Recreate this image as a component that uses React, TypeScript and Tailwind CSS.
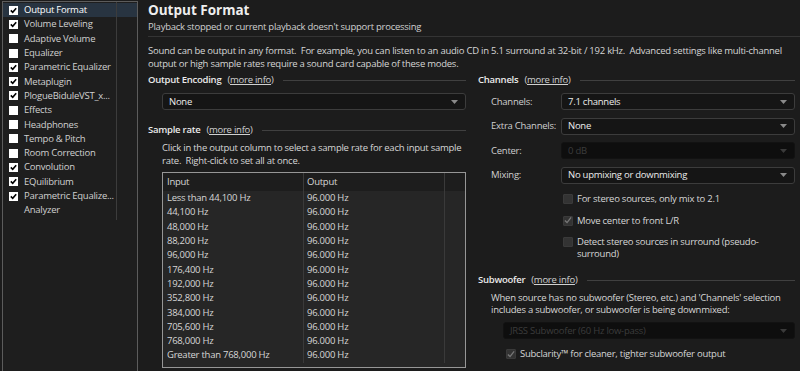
import React from "react";

const font = { fontFamily: '"Open Sans", "Noto Sans", sans-serif' };

const sideItems: [string, boolean | null][] = [
  ["Output Format", true],
  ["Volume Leveling", true],
  ["Adaptive Volume", false],
  ["Equalizer", false],
  ["Parametric Equalizer", true],
  ["Metaplugin", true],
  ["PlogueBiduleVST_x...", true],
  ["Effects", false],
  ["Headphones", false],
  ["Tempo & Pitch", false],
  ["Room Correction", false],
  ["Convolution", true],
  ["EQuilibrium", true],
  ["Parametric Equalize...", true],
  ["Analyzer", null],
];

const rates = [
  "Less than 44,100 Hz",
  "44,100 Hz",
  "48,000 Hz",
  "88,200 Hz",
  "96,000 Hz",
  "176,400 Hz",
  "192,000 Hz",
  "352,800 Hz",
  "384,000 Hz",
  "705,600 Hz",
  "768,000 Hz",
  "Greater than 768,000 Hz",
];

function WhiteCheck({ checked }: { checked: boolean }) {
  return (
    <div className="w-[9px] h-[9px] bg-white flex items-center justify-center shrink-0">
      {checked && (
        <svg width="7" height="7" viewBox="0 0 7 7">
          <path d="M0.8 3.4 L2.7 5.3 L6.2 1.2" stroke="#000" strokeWidth="1.6" fill="none" />
        </svg>
      )}
    </div>
  );
}

function DarkCheck({ checked }: { checked?: boolean }) {
  return (
    <div className="w-[10px] h-[10px] bg-[#333333] border border-[#3a3a3a] rounded-[1px] flex items-center justify-center shrink-0">
      {checked && (
        <svg width="9" height="9" viewBox="0 0 9 9">
          <path d="M1 4.5 L3.4 6.8 L8 1" stroke="#777" strokeWidth="1.5" fill="none" />
        </svg>
      )}
    </div>
  );
}

function Caret({ color = "#8a8a8a" }: { color?: string }) {
  return (
    <svg width="7" height="4" viewBox="0 0 7 4">
      <path d="M0 0 H7 L3.5 4 Z" fill={color} />
    </svg>
  );
}

function Select({ value, disabled, className = "" }: { value: string; disabled?: boolean; className?: string }) {
  return (
    <div
      className={
        "h-[17px] rounded-[3px] border flex items-center justify-between pl-[6px] pr-[7px] " +
        (disabled
          ? "bg-[#0e0e0e] border-[#121212] text-[#3c3c3c]"
          : "bg-[#151515] border-[#3c3c3c] text-[#ececec]") +
        " " +
        className
      }
    >
      <span className="whitespace-nowrap">{value}</span>
      <Caret color={disabled ? "#3a3a3a" : "#8a8a8a"} />
    </div>
  );
}

function SectionHead({ title }: { title: string }) {
  return (
    <div className="flex items-center gap-[6px] h-[14px]">
      <span className="font-semibold text-[#eaeaea] whitespace-nowrap">{title}</span>
      <span className="text-[#d0d0d0] whitespace-nowrap">
        (<span className="underline">more info</span>)
      </span>
      <div className="flex-1 h-px bg-[#404040] ml-[3px]" />
    </div>
  );
}

export default function App() {
  return (
    <div
      className="w-[800px] h-[371px] bg-[#1c1c1c] text-[#d6d6d6] text-[9.5px] tracking-[-0.25px] leading-[12px] flex overflow-hidden"
      style={font}
    >
      {/* Sidebar */}
      <div className="w-[138px] shrink-0 h-full pl-[2px] pt-[1px]">
        <div className="h-[372px] border border-[#5c5c5c] bg-[#1e1e1e] relative pt-[1px] w-[136px]">
          <div className="absolute left-[113px] top-0 h-[218px] w-px bg-[#3c3c3c]" />
          {sideItems.map(([name, c], i) => (
            <div
              key={name}
              className={
                "h-[14.3px] flex items-center " + (i === 0 ? "bg-[#283441] text-white" : "text-[#d0d0d0]")
              }
            >
              <div className="w-[21px] pl-[6px] flex items-center shrink-0">
                {c !== null && <WhiteCheck checked={c} />}
              </div>
              <span className="whitespace-nowrap">{name}</span>
            </div>
          ))}
        </div>
      </div>

      {/* Main */}
      <div className="flex-1 pl-[10px] pt-[1px] pr-[5px]">
        <div className="h-[18px] flex items-center text-[13.5px] tracking-[0px] font-bold text-[#eeeeee]">
          Output Format
        </div>
        <div className="h-[13px] leading-[13px] mt-[1px] text-[#d0d0d0]">
          Playback stopped or current playback doesn't support processing
        </div>
        <div className="h-px bg-[#343434] mt-[3px] -mr-[5px]" />
        <div className="mt-[8px] leading-[12.5px] text-[#d6d6d6]">
          Sound can be output in any format.&nbsp; For example, you can listen to an audio CD in 5.1 surround at 32-bit / 192 kHz.&nbsp; Advanced settings like multi-channel output or high sample rates require a sound card capable of these modes.
        </div>

        <div className="flex mt-[3px] gap-[12px]">
          {/* Left column */}
          <div className="w-[318px] shrink-0">
            <SectionHead title="Output Encoding" />
            <div className="pl-[14px] mt-[6px]">
              <Select value="None" />
            </div>

            <div className="mt-[13px]">
              <SectionHead title="Sample rate" />
            </div>
            <div className="pl-[14px] mt-[5px]">
              <div className="leading-[12.5px]">
                Click in the output column to select a sample rate for each input sample rate.&nbsp; Right-click to set all at once.
              </div>
              <div className="mt-[5px] border border-[#969696] bg-[#262626] h-[196px] flex flex-col">
                <div className="flex h-[18px] shrink-0 bg-[#1d1d1d]">
                  <div className="w-[141px] pl-[4px] border-r border-[#3a3a3a] flex items-center">Input</div>
                  <div className="w-[141px] pl-[3px] border-r border-[#3a3a3a] flex items-center">Output</div>
                  <div className="flex-1" />
                </div>
                <div className="flex flex-1 pb-[4px]">
                  <div className="w-[141px] border-r border-[#3a3a3a] pl-[4px]">
                    {rates.map((r) => (
                      <div key={r} className="h-[14.3px] flex items-center whitespace-nowrap">{r}</div>
                    ))}
                  </div>
                  <div className="w-[141px] border-r border-[#3a3a3a] pl-[3px]">
                    {rates.map((r) => (
                      <div key={r} className="h-[14.3px] flex items-center">96.000 Hz</div>
                    ))}
                  </div>
                  <div className="flex-1" />
                </div>
              </div>
            </div>
          </div>

          {/* Right column */}
          <div className="flex-1">
            <SectionHead title="Channels" />
            <div className="pl-[13px] mt-[6px] flex flex-col gap-[7.5px]">
              {[
                ["Channels:", "7.1 channels", false],
                ["Extra Channels:", "None", false],
                ["Center:", "0 dB", true],
                ["Mixing:", "No upmixing or downmixing", false],
              ].map(([l, v, d]) => (
                <div key={l as string} className="flex items-center">
                  <div className="w-[70px] shrink-0 whitespace-nowrap text-[#cfcfcf]">{l as string}</div>
                  <Select value={v as string} disabled={d as boolean} className="flex-1" />
                </div>
              ))}
            </div>
            <div className="pl-[85px] mt-[9.5px] flex flex-col gap-[9.7px]">
              <div className="flex items-center gap-[4px] h-[12px]">
                <DarkCheck />
                <span>For stereo sources, only mix to 2.1</span>
              </div>
              <div className="flex items-center gap-[4px] h-[12px]">
                <DarkCheck checked />
                <span>Move center to front L/R</span>
              </div>
              <div className="flex items-start gap-[4px]">
                <div className="pt-[1px]">
                  <DarkCheck />
                </div>
                <span>
                  Detect stereo sources in surround (pseudo-
                  <br />
                  surround)
                </span>
              </div>
            </div>

            <div className="mt-[12.7px]">
              <SectionHead title="Subwoofer" />
            </div>
            <div className="pl-[13px] mt-[5.3px]">
              <div className="pr-[10px]">
                When source has no subwoofer (Stereo, etc.) and 'Channels' selection includes a subwoofer, or subwoofer is being downmixed:
              </div>
              <div className="pl-[12px] mt-[6px]">
                <Select value="JRSS Subwoofer (60 Hz low-pass)" disabled />
              </div>
              <div className="pl-[15px] mt-[9px] flex items-center gap-[4px] h-[12px]">
                <DarkCheck checked />
                <span>Subclarity™ for cleaner, tighter subwoofer output</span>
              </div>
            </div>
          </div>
        </div>
      </div>
    </div>
  );
}
